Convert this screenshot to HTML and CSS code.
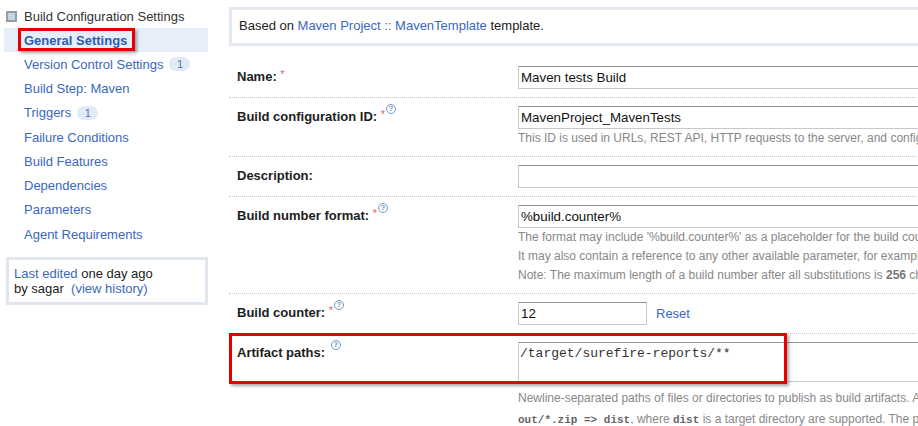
FILE: index.html
```html
<!DOCTYPE html>
<html>
<head>
<meta charset="utf-8">
<link rel="stylesheet" href="styles.css">
</head>
<body>
<div class="page">
  <aside class="sidebar">
    <div class="side-head"><span class="chk"></span>Build Configuration Settings</div>
    <ul class="nav">
      <li class="selected"><a href="#">General Settings</a><span class="hl hl-nav"></span></li>
      <li><a href="#">Version Control Settings</a><span class="badge">1</span></li>
      <li><a href="#">Build Step: Maven</a></li>
      <li><a href="#">Triggers</a><span class="badge">1</span></li>
      <li><a href="#">Failure Conditions</a></li>
      <li><a href="#">Build Features</a></li>
      <li><a href="#">Dependencies</a></li>
      <li><a href="#">Parameters</a></li>
      <li><a href="#">Agent Requirements</a></li>
    </ul>
    <div class="edited">
      <a href="#">Last edited</a> one day ago<br>
      by sagar&nbsp; <a href="#">(view history)</a>
    </div>
  </aside>

  <main class="main">
    <div class="template">Based on <a href="#">Maven Project :: MavenTemplate</a> template.</div>

    <div class="form">
      <div class="row">
        <div class="label">Name: <span class="req">*</span></div>
        <div class="field"><input class="text" type="text" value="Maven tests Build"></div>
      </div>
      <div class="row">
        <div class="label">Build configuration ID: <span class="req">*</span><span class="help">?</span></div>
        <div class="field">
          <input class="text" type="text" value="MavenProject_MavenTests">
          <div class="note">This ID is used in URLs, REST API, HTTP requests to the server, and configuration settings in the TeamCity Data Directory.</div>
        </div>
      </div>
      <div class="row">
        <div class="label">Description:</div>
        <div class="field"><input class="text" type="text" value=""></div>
      </div>
      <div class="row">
        <div class="label">Build number format: <span class="req">*</span><span class="help">?</span></div>
        <div class="field">
          <input class="text" type="text" value="%build.counter%">
          <div class="note">The format may include '%build.counter%' as a placeholder for the build counter value, for example, 1.%build.counter%.</div>
          <div class="note">It may also contain a reference to any other available parameter, for example, %build.vcs.number.VCS_root_ID%.</div>
          <div class="note">Note: The maximum length of a build number after all substitutions is <b>256</b> characters.</div>
        </div>
      </div>
      <div class="row">
        <div class="label">Build counter: <span class="req">*</span><span class="help">?</span></div>
        <div class="field counter-field">
          <input class="text counter" type="text" value="12"><a class="reset" href="#">Reset</a>
        </div>
      </div>
      <div class="row last">
        <div class="label">Artifact paths: <span class="help help-sp">?</span></div>
        <div class="field">
          <textarea class="paths">/target/surefire-reports/**</textarea>
          <div class="note note2">Newline-separated paths of files or directories to publish as build artifacts. Ant-style wildcards like <code>dir/**/*.zip</code> and target directories like</div>
          <div class="note note2"><code>out/*.zip =&gt; dist</code>, where <code>dist</code> is a target directory are supported. The paths are relative to the build checkout directory.</div>
        </div>
      </div>
    </div>
    <span class="hl hl-art"></span>
  </main>
</div>
</body>
</html>
```

FILE: styles.css
```css
html, body {
  margin: 0;
  padding: 0;
  overflow: hidden;
  background: #fff;
}
body {
  font-family: "Liberation Sans", Arial, sans-serif;
  font-size: 13px;
  color: #222;
}
a {
  color: #3a67c0;
  text-decoration: none;
}
.page {
  display: flex;
  align-items: flex-start;
  width: 980px;
}

/* sidebar */
.sidebar {
  width: 204px;
  padding-left: 4px;
  flex: none;
}
.side-head {
  display: flex;
  align-items: center;
  height: 28px;
  padding-top: 5px;
  box-sizing: border-box;
  line-height: 22px;
  color: #333;
}
.chk {
  width: 7px;
  height: 7px;
  border: 2px solid #9c9c9c;
  background: #c5d5e5;
  margin: 0 7px 0 2px;
}
.nav {
  list-style: none;
  margin: 0;
  padding: 0;
}
.nav li {
  position: relative;
  display: flex;
  align-items: center;
  height: 24.25px;
  padding-left: 20px;
}
.nav li.selected {
  background: #e6eef9;
}
.nav li.selected a {
  font-weight: bold;
  color: #2d5cb2;
}
.badge {
  display: inline-block;
  margin-left: 6px;
  width: 21px;
  height: 14px;
  line-height: 14px;
  border-radius: 7px;
  background: #e2eaf6;
  color: #5573a8;
  font-size: 11px;
  text-align: center;
}
.edited {
  margin: 11px 0 0 2px;
  border: 3px solid #e1e6ee;
  padding: 7px 5px 6px;
  line-height: 14.5px;
  color: #222;
}

/* main */
.main {
  position: relative;
  margin-left: 21px;
  width: 740px;
  flex: none;
}
.template {
  margin-top: 7px;
  border: 3px solid #e3e7ee;
  padding: 8px 7px 9px;
  line-height: 16px;
}
.form {
  margin-top: 12px;
}
.row {
  display: grid;
  grid-template-columns: 289px 1fr;
  padding: 8px 0;
  border-bottom: 1px dotted #c4c4c4;
}
.row.last {
  border-bottom: none;
}
.label {
  padding: 2px 0 0 8px;
  font-weight: bold;
  line-height: 17px;
  color: #1d1d1d;
  white-space: nowrap;
}
.req {
  color: #e86060;
  font-weight: normal;
  font-size: 11px;
  vertical-align: top;
  position: relative;
  top: -2px;
}
.help {
  display: inline-block;
  box-sizing: border-box;
  width: 10px;
  height: 10px;
  border: 1px solid #6b9bc8;
  border-radius: 50%;
  color: #6b9bc8;
  font-size: 8px;
  line-height: 8px;
  text-align: center;
  font-weight: bold;
  vertical-align: top;
  margin-top: -4px;
  margin-left: 1px;
}
.help-sp {
  margin-left: 2px;
}
.field {
  min-width: 0;
  white-space: nowrap;
  overflow: hidden;
}
.text {
  display: block;
  box-sizing: border-box;
  width: 100%;
  height: 23px;
  margin: 0;
  padding: 1px 2px;
  border: 1px solid #c8c8c8;
  border-top-color: #959595;
  font-family: "Liberation Sans", Arial, sans-serif;
  font-size: 13.33px;
  color: #111;
  background: #fff;
}
.counter-field {
  display: flex;
  align-items: center;
}
.text.counter {
  width: 129px;
}
.reset {
  margin-left: 9px;
}
.note {
  font-size: 12px;
  line-height: 19px;
  color: #888;
}
.note b {
  color: #777;
}
.paths {
  display: block;
  box-sizing: border-box;
  width: 100%;
  height: 40px;
  margin: 0 0 6px;
  padding: 3px 1px;
  border: 1px solid #c8c8c8;
  border-top-color: #959595;
  font-family: "Liberation Mono", "Courier New", monospace;
  font-size: 13px;
  color: #333;
  resize: none;
}
.note2 {
  line-height: 20px;
}
code {
  font-family: "Liberation Mono", "Courier New", monospace;
  font-weight: bold;
  font-size: 11px;
  color: #666;
}

/* red annotation boxes */
.hl {
  position: absolute;
  box-sizing: border-box;
  border: 3px solid #e60000;
  box-shadow: 2px 2px 3px rgba(0, 0, 0, 0.35);
  pointer-events: none;
}
.hl-nav {
  left: 14px;
  top: 0;
  width: 117px;
  height: 23px;
}
.hl-art {
  left: 0;
  top: 333px;
  width: 558px;
  height: 51px;
}
```
